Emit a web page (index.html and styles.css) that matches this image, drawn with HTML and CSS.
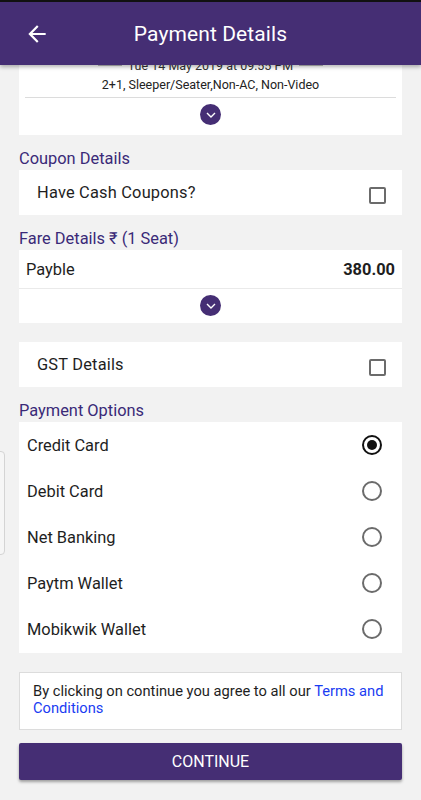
FILE: index.html
```html
<!DOCTYPE html>
<html>
<head>
<meta charset="utf-8">
<link rel="stylesheet" href="styles.css">
</head>
<body>
<header class="appbar">
  <svg class="back" width="26" height="26" viewBox="0 0 24 24"><path d="M20 11H7.83l5.59-5.59L12 4l-8 8 8 8 1.41-1.41L7.83 13H20v-2z" fill="#fff"/></svg>
  <h1 class="title">Payment Details</h1>
</header>
<div class="side-tab"></div>
<main class="content">
  <section class="card trip">
    <div class="date-row"><span class="dash"></span><span class="date">Tue 14 May 2019 at 09:55 PM</span><span class="dash"></span></div>
    <div class="bus-type">2+1, Sleeper/Seater,Non-AC, Non-Video</div>
    <div class="trip-divider"></div>
    <div class="expand trip-expand"><span class="chev"><svg width="10" height="6" viewBox="0 0 10 6"><path d="M1 1l4 4 4-4" fill="none" stroke="#fff" stroke-width="1.4"/></svg></span></div>
  </section>

  <h2 class="label">Coupon Details</h2>
  <section class="card check-row coupon">
    <span>Have Cash Coupons?</span>
    <span class="checkbox"></span>
  </section>

  <h2 class="label">Fare Details ₹ (1 Seat)</h2>
  <section class="card fare">
    <div class="fare-row"><span>Payble</span><span class="amount">380.00</span></div>
    <div class="expand fare-expand"><span class="chev"><svg width="10" height="6" viewBox="0 0 10 6"><path d="M1 1l4 4 4-4" fill="none" stroke="#fff" stroke-width="1.4"/></svg></span></div>
  </section>

  <section class="card check-row gst">
    <span>GST Details</span>
    <span class="checkbox"></span>
  </section>

  <h2 class="label">Payment Options</h2>
  <section class="card options">
    <div class="opt"><span>Credit Card</span><span class="radio on"></span></div>
    <div class="opt"><span>Debit Card</span><span class="radio"></span></div>
    <div class="opt"><span>Net Banking</span><span class="radio"></span></div>
    <div class="opt"><span>Paytm Wallet</span><span class="radio"></span></div>
    <div class="opt"><span>Mobikwik Wallet</span><span class="radio"></span></div>
  </section>

  <div class="terms">By clicking on continue you agree to all our <a class="link">Terms and Conditions</a></div>

  <button class="continue">CONTINUE</button>
</main>
</body>
</html>
```

FILE: styles.css
```css
* { box-sizing: border-box; }
html, body { margin: 0; padding: 0; }
body {
  background: #f2f2f2;
  font-family: Roboto, "Noto Sans", sans-serif;
  color: #1e1e1e;
  width: 421px;
  height: 800px;
  overflow: hidden;
}
.appbar {
  position: relative;
  z-index: 2;
  height: 65px;
  background: #452e74;
  border-top: 2px solid #111;
  display: flex;
  align-items: center;
  box-shadow: 0 2px 4px rgba(0,0,0,0.3);
}
.back { margin-left: 24px; flex: none; }
.title {
  margin: 0;
  flex: 1;
  text-align: center;
  color: #fff;
  font-weight: 400;
  font-size: 21px;
  padding-right: 50px;
  letter-spacing: 0.1px;
}
.side-tab {
  position: absolute;
  left: -4px;
  top: 451px;
  width: 9px;
  height: 104px;
  border: 1px solid #d4d4d4;
  border-radius: 4px;
  background: #f6f6f6;
}
.content { padding: 0 19px; }
.card { background: #fff; }
.trip { overflow: hidden; padding: 0 6px; }
.date-row {
  margin-top: -7px;
  height: 14px;
  display: flex;
  align-items: center;
  justify-content: center;
  gap: 6px;
  font-size: 12.5px;
  color: #333;
}
.dash { width: 24px; height: 1px; background: #bbb; }
.bus-type {
  margin-top: 5px;
  text-align: center;
  font-size: 12.5px;
  line-height: 16px;
  color: #222;
}
.trip-divider { margin-top: 4px; height: 1px; background: #dcdcdc; }
.expand { display: flex; justify-content: center; padding: 6px 0 8px; }
.trip-expand { padding-bottom: 10px; }
.chev {
  width: 21px; height: 21px; border-radius: 50%;
  background: #452e74;
  display: flex; align-items: center; justify-content: center;
}
.chev svg { margin-top: 1px; }
.label {
  margin: 14px 0 1px;
  font-size: 16.4px;
  line-height: 20px;
  font-weight: 400;
  color: #3a2a78;
}
.check-row {
  height: 46px;
  display: flex;
  align-items: center;
  justify-content: space-between;
  padding: 0 16px 0 18px;
  font-size: 16.4px;
  letter-spacing: 0.2px;
}
.coupon { height: 45px; }
.checkbox {
  width: 17px; height: 17px;
  border: 2px solid #6b6b6b;
  border-radius: 2px;
  margin-top: 5px;
}
.fare-row {
  height: 39px;
  display: flex;
  align-items: center;
  justify-content: space-between;
  padding: 0 7px;
  font-size: 16.4px;
  border-bottom: 1px solid #eaeaea;
}
.amount { font-weight: 700; }
.fare-expand { padding: 6px 0 7px; }
.gst { margin-top: 19px; height: 45px; }
.options { padding: 0 0 1px; }
.opt {
  height: 46px;
  display: flex;
  align-items: center;
  justify-content: space-between;
  padding: 0 20px 0 8px;
  font-size: 16.4px;
}
.radio {
  width: 20px; height: 20px;
  border: 2px solid #6b6b6b;
  border-radius: 50%;
  display: flex; align-items: center; justify-content: center;
}
.radio.on { border-color: #111; }
.radio.on::after {
  content: "";
  width: 10px; height: 10px; border-radius: 50%;
  background: #111;
}
.terms {
  margin-top: 19px;
  background: #fff;
  border: 1px solid #dcdcdc;
  padding: 10px 13px 12px;
  font-size: 14.7px;
  line-height: 17px;
  color: #1e1e1e;
}
.link { color: #1a3cf2; }
.continue {
  margin-top: 13px;
  width: 100%;
  height: 37px;
  border: none;
  border-radius: 2px;
  background: #452e74;
  color: #fff;
  font-family: Roboto, sans-serif;
  font-size: 16px;
  box-shadow: 0 2px 3px rgba(0,0,0,0.35);
}
```
